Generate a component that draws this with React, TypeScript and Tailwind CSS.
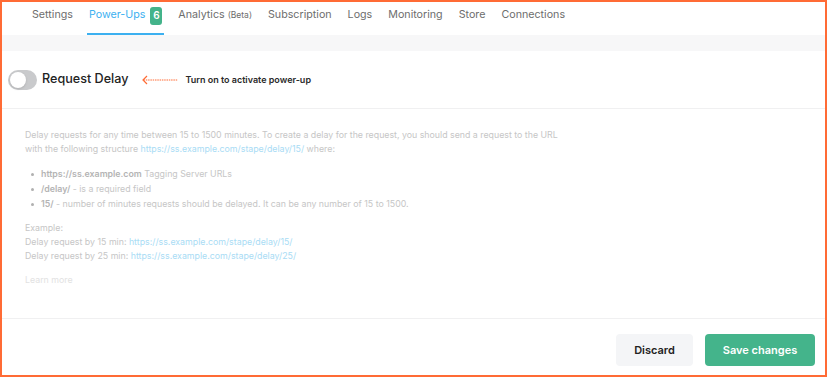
import React from 'react';

const tabs = ['Settings', 'Power-Ups', 'Analytics', 'Subscription', 'Logs', 'Monitoring', 'Store', 'Connections'];

const Link: React.FC<{ children: React.ReactNode }> = ({ children }) => (
  <span className="text-[#a9dcf5]">{children}</span>
);

const App: React.FC = () => {
  return (
    <div
      className="w-[828px] h-[379px] bg-white overflow-hidden"
      style={{ fontFamily: 'Inter, "Liberation Sans", sans-serif' }}
    >
      <div className="h-[377px] w-[827px] border-2 border-[#ff6b35] flex flex-col">
        {/* tabs */}
        <nav className="h-[33px] flex items-stretch pl-[30px] gap-[16px] shrink-0">
          {tabs.map((t) => {
            const active = t === 'Power-Ups';
            return (
              <div
                key={t}
                className={`flex items-center gap-[5px] pb-[4px] text-[10.7px] ${active ? 'text-[#3cb0f0] border-b-2 border-[#3cb0f0] -mx-[2px] px-[2px]' : 'text-[#6d6d6d] border-b-2 border-transparent'}`}
              >
                <span>{t}</span>
                {t === 'Analytics' && <span className="text-[8.5px] -ml-[2px]">(Beta)</span>}
                {active && (
                  <span className="bg-[#43b38a] text-white text-[10px] font-semibold rounded-[3px] w-[12px] h-[18px] flex items-center justify-center">
                    6
                  </span>
                )}
              </div>
            );
          })}
        </nav>

        <div className="h-[16px] bg-[#f7f7f8] shrink-0" />

        {/* toggle row */}
        <div className="h-[58px] flex items-center border-b border-[#f0f0f1] pl-[6px] shrink-0">
          <div className="w-[29px] h-[20px] rounded-full bg-[#c9cacc] p-[2px] flex items-center">
            <div className="w-[16px] h-[16px] rounded-full bg-white shadow-sm" />
          </div>
          <span className="ml-[5px] text-[12.6px] font-medium text-[#222]">Request Delay</span>
          <svg className="ml-[14px]" width="36" height="10" viewBox="0 0 36 10">
            <path d="M5 1 L1 5 L5 9" fill="none" stroke="#ff6b35" strokeWidth="1.2" />
            <line x1="1.5" y1="5" x2="36" y2="5" stroke="#ff6b35" strokeWidth="1" strokeDasharray="1.5 0.8" />
          </svg>
          <span className="ml-[7px] text-[9px] font-semibold text-[#2a2a2a]">Turn on to activate power-up</span>
        </div>

        {/* description */}
        <div className="flex-1 pl-[23px] pt-[19px] text-[8.8px] leading-[14px] text-[#c6c6c6]">
          <p>
            Delay requests for any time between 15 to 1500 minutes. To create a delay for the request, you should send a request to the URL
            <br />
            with the following structure <Link>https://ss.example.com/stape/delay/15/</Link> where:
          </p>
          <ul className="mt-[11px] flex flex-col gap-[1px]">
            <li className="flex items-center">
              <span className="w-[3px] h-[3px] rounded-full bg-[#b0b0b0] ml-[6px] mr-[7px]" />
              <b className="font-semibold text-[#b4b4b4]">https://ss.example.com</b>&nbsp;Tagging Server URLs
            </li>
            <li className="flex items-center">
              <span className="w-[3px] h-[3px] rounded-full bg-[#b0b0b0] ml-[6px] mr-[7px]" />
              <b className="font-semibold text-[#b4b4b4]">/delay/</b>&nbsp;- is a required field
            </li>
            <li className="flex items-center">
              <span className="w-[3px] h-[3px] rounded-full bg-[#b0b0b0] ml-[6px] mr-[7px]" />
              <b className="font-semibold text-[#b4b4b4]">15/</b>&nbsp;- number of minutes requests should be delayed. It can be any number of 15 to 1500.
            </li>
          </ul>
          <p className="mt-[10px]">Example:</p>
          <p>Delay request by 15 min: <Link>https://ss.example.com/stape/delay/15/</Link></p>
          <p>Delay request by 25 min: <Link>https://ss.example.com/stape/delay/25/</Link></p>
          <p className="mt-[10px] text-[#e2e2e2]">Learn more</p>
        </div>

        {/* footer */}
        <div className="h-[57px] border-t border-[#f0f0f1] flex items-start pt-[15px] justify-end gap-[12px] pr-[10px] shrink-0">
          <button className="w-[77px] h-[32px] rounded-[4px] bg-[#f4f5f7] text-[11px] font-semibold text-[#222]">
            Discard
          </button>
          <button className="w-[110px] h-[32px] rounded-[4px] bg-[#44b48b] text-[11px] font-semibold text-white">
            Save changes
          </button>
        </div>
      </div>
    </div>
  );
};

export default App;
